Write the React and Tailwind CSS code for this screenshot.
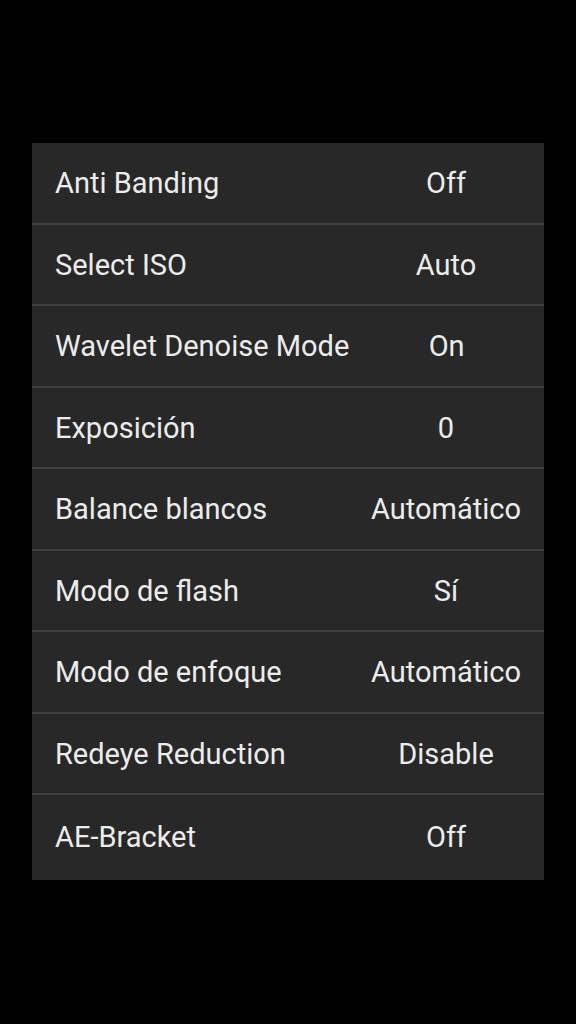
import React from "react";

const rows = [
  ["Anti Banding", "Off"],
  ["Select ISO", "Auto"],
  ["Wavelet Denoise Mode", "On"],
  ["Exposición", "0"],
  ["Balance blancos", "Automático"],
  ["Modo de flash", "Sí"],
  ["Modo de enfoque", "Automático"],
  ["Redeye Reduction", "Disable"],
  ["AE-Bracket", "Off"],
];

export default function App() {
  return (
    <div className="w-[576px] h-[1024px] bg-black pt-[143px] px-[32px]" style={{ fontFamily: "Roboto, 'Noto Sans', sans-serif" }}>
      <div className="w-[512px] bg-[#282828] flex flex-col">
        {rows.map(([label, value], i) => (
          <div key={i} className={"flex items-center pt-[2px] " + (i < rows.length - 1 ? "h-[81.5px] border-b-2 border-[#404040]" : "h-[85px] pb-[1px]")}>
            <div className="flex-1 pl-[23px] text-[29px] text-[#ececec] whitespace-nowrap">{label}</div>
            <div className="w-[196px] text-center text-[29px] text-[#ececec]">{value}</div>
          </div>
        ))}
      </div>
    </div>
  );
}
